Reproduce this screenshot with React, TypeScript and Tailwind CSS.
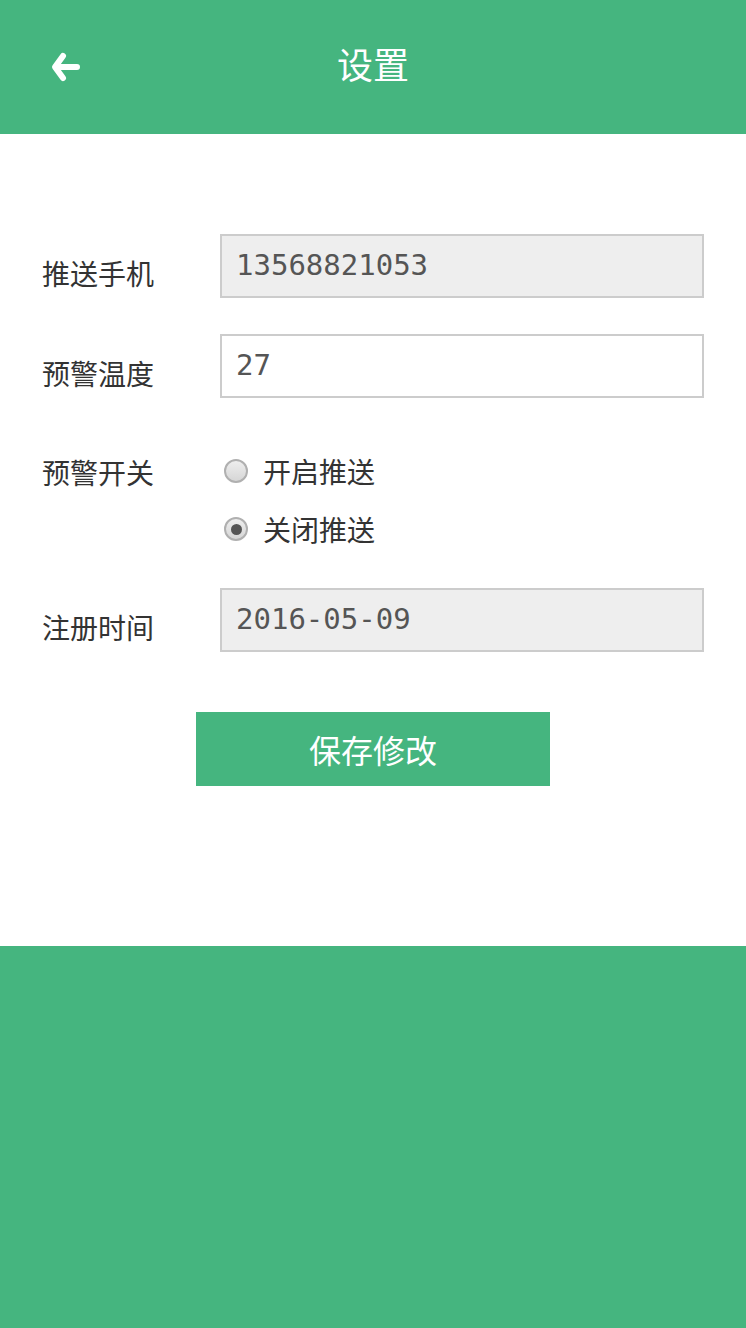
import { useState } from "react";

const cjk = "font-['Noto_Sans_CJK_SC',sans-serif]";
const mono = "font-['DejaVu_Sans_Mono',monospace]";

function Field({ label, value, disabled }: { label: string; value: string; disabled?: boolean }) {
  return (
    <div className="flex items-start">
      <div className={`w-[178px] shrink-0 h-[64px] translate-y-[7px] flex items-center text-[28px] text-[#333] ${cjk}`}>
        {label}
      </div>
      <div
        className={`flex-1 h-[64px] border-2 border-[#cccccc] flex items-center pl-[14px] text-[29px] text-[#555] ${mono} ${
          disabled ? "bg-[#eeeeee]" : "bg-white"
        }`}
      >
        {value}
      </div>
    </div>
  );
}

function Radio({ checked, label, onClick }: { checked: boolean; label: string; onClick: () => void }) {
  return (
    <button type="button" onClick={onClick} className="flex items-center h-[44px] pl-[4px]">
      <span className="w-[24px] h-[24px] rounded-full border-2 border-[#b0b0b0] bg-gradient-to-b from-[#eeeeee] to-[#d6d6d6] flex items-center justify-center">
        {checked && <span className="w-[11px] h-[11px] rounded-full bg-[#555]" />}
      </span>
      <span className={`ml-[15px] text-[28px] text-[#333] ${cjk}`}>{label}</span>
    </button>
  );
}

export default function App() {
  const [push, setPush] = useState(false);

  return (
    <div className="w-full min-h-[1328px] flex flex-col bg-[#45b57f]">
      <header className="h-[134px] relative flex items-center justify-center bg-[#45b57f]">
        <button type="button" className="absolute left-[50px] top-[51px]">
          <svg width="32" height="32" viewBox="0 0 32 32" fill="none">
            <path
              d="M13 5 L5 16 L13 27 M6 16 H27"
              stroke="white"
              strokeWidth="6"
              strokeLinecap="round"
              strokeLinejoin="round"
            />
          </svg>
        </button>
        <h1 className={`text-[36px] text-white ${cjk} -mt-[8px]`}>设置</h1>
      </header>

      <main className="h-[812px] bg-white px-[42px] pt-[100px]">
        <Field label="推送手机" value="13568821053" disabled />
        <div className="mt-[36px]">
          <Field label="预警温度" value="27" />
        </div>

        <div className="mt-[51px] flex items-start">
          <div className={`w-[178px] shrink-0 h-[44px] translate-y-[1px] flex items-center text-[28px] text-[#333] ${cjk}`}>
            预警开关
          </div>
          <div className="flex flex-col gap-[14px]">
            <Radio checked={push} label="开启推送" onClick={() => setPush(true)} />
            <Radio checked={!push} label="关闭推送" onClick={() => setPush(false)} />
          </div>
        </div>

        <div className="mt-[37px]">
          <Field label="注册时间" value="2016-05-09" disabled />
        </div>

        <div className="mt-[60px] flex justify-center">
          <button type="button" className={`w-[354px] h-[74px] bg-[#45b57f] text-white text-[32px] ${cjk}`}>
            保存修改
          </button>
        </div>
      </main>

      <footer className="flex-1 bg-[#45b57f]" />
    </div>
  );
}
